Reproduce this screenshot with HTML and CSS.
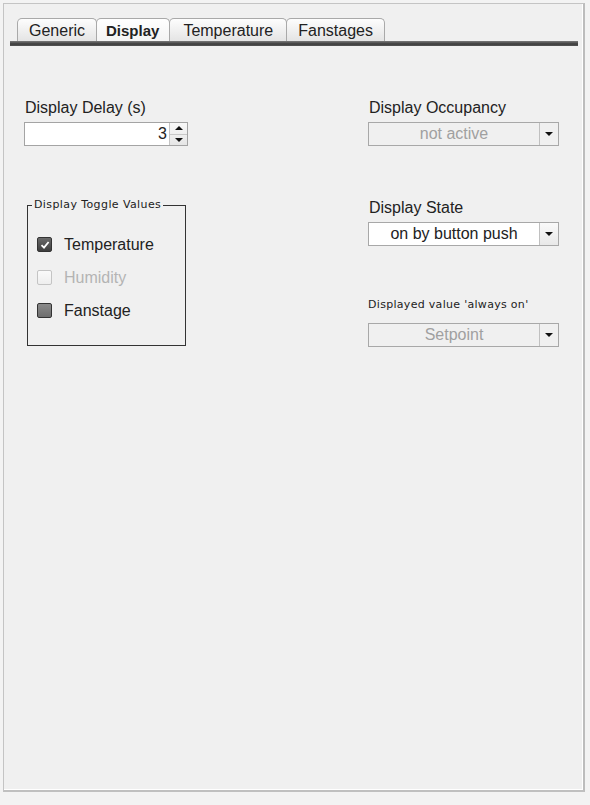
FILE: index.html
```html
<!DOCTYPE html>
<html lang="en">
<head>
  <meta charset="UTF-8" />
  <title>Display Settings</title>
  <link rel="stylesheet" href="styles.css">
</head>
<body>
  <div class="panel">
    <div class="tabs">
      <div class="tab">Generic</div>
      <div class="tab active">Display</div>
      <div class="tab wide">Temperature</div>
      <div class="tab">Fanstages</div>
    </div>
    <div class="tab-bar"></div>

    <div class="content">
      <div class="col left">
        <div class="field">
          <label class="label">Display Delay (s)</label>
          <div class="spinner">
            <div class="spin-value">3</div>
            <div class="spin-btns">
              <span class="spin-up"></span>
              <span class="spin-down"></span>
            </div>
          </div>
        </div>

        <div class="group">
          <div class="legend">Display Toggle Values</div>
          <div class="check-row">
            <span class="box checked">
              <svg width="10" height="10" viewBox="0 0 10 10"><path d="M1.5 5.2 L4 7.6 L8.6 2" fill="none" stroke="#fff" stroke-width="1.8"/></svg>
            </span>
            <span>Temperature</span>
          </div>
          <div class="check-row disabled">
            <span class="box"></span>
            <span>Humidity</span>
          </div>
          <div class="check-row">
            <span class="box mixed"></span>
            <span>Fanstage</span>
          </div>
        </div>
      </div>

      <div class="col right">
        <div class="field">
          <label class="label">Display Occupancy</label>
          <div class="select disabled">
            <div class="select-value">not active</div>
            <div class="select-btn"><span class="arrow"></span></div>
          </div>
        </div>

        <div class="field state">
          <label class="label">Display State</label>
          <div class="select">
            <div class="select-value">on by button push</div>
            <div class="select-btn"><span class="arrow"></span></div>
          </div>
        </div>

        <div class="field always">
          <label class="label small">Displayed value 'always on'</label>
          <div class="select disabled">
            <div class="select-value">Setpoint</div>
            <div class="select-btn"><span class="arrow"></span></div>
          </div>
        </div>
      </div>
    </div>
  </div>
</body>
</html>
```

FILE: styles.css
```css
* {
  box-sizing: border-box;
}
body {
  margin: 0;
  background: #f3f3f3;
  font-family: 'Liberation Sans', Arial, sans-serif;
  color: #222;
}
.panel {
  margin: 3px 0 0 3px;
  width: 582px;
  height: 789px;
  background: #f0f0f0;
  border: 1px solid #c4c4c4;
  border-right: 2px solid #bdbdbd;
  border-bottom: 2px solid #c0c0c0;
  box-shadow: inset -1px -1px 0 #fff;
}
.tabs {
  display: flex;
  padding: 14px 0 0 13px;
}
.tab {
  height: 23px;
  line-height: 24px;
  padding: 0 11px;
  font-size: 16px;
  color: #222;
  border: 1px solid #a9a9a9;
  border-bottom: none;
  border-radius: 5px 5px 0 0;
  background: linear-gradient(#fdfdfd, #e4e4e4);
  margin-right: -1px;
}
.tab.wide {
  padding: 0 13px;
}
.tab.active {
  font-weight: bold;
  font-size: 15px;
  background: linear-gradient(#ffffff, #f4f4f4);
  padding: 0 10px 0 9px;
}
.tab-bar {
  margin: 0 5px 0 6px;
  height: 5px;
  background: linear-gradient(#7a7a7a, #3c3c3c 60%, #555);
}
.content {
  display: flex;
  padding: 0 0 0 20px;
}
.col {
  display: flex;
  flex-direction: column;
}
.left {
  width: 164px;
  margin-right: 180px;
}
.right {
  width: 191px;
}
.field {
  display: flex;
  flex-direction: column;
  margin-top: 53px;
}
.label {
  font-size: 16px;
  line-height: 17px;
  margin-bottom: 6px;
  padding-left: 1px;
}
.label.small {
  font-family: 'DejaVu Sans', sans-serif;
  font-size: 11px;
  line-height: 14px;
  margin-bottom: 11px;
  letter-spacing: 0.3px;
  padding-left: 0;
}
.field.state {
  margin-top: 53px;
}
.field.always {
  margin-top: 52px;
}
.spinner {
  display: flex;
  height: 24px;
  border: 1px solid #a4a4a4;
  background: #fff;
}
.spin-value {
  flex: 1;
  text-align: right;
  font-size: 16px;
  line-height: 22px;
  padding-right: 2px;
}
.spin-btns {
  width: 18px;
  display: flex;
  flex-direction: column;
  border-left: 1px solid #c4c4c4;
  background: linear-gradient(#f8f8f8, #e6e6e6);
}
.spin-up, .spin-down {
  flex: 1;
  display: flex;
  align-items: center;
  justify-content: center;
}
.spin-up {
  border-bottom: 1px solid #c8c8c8;
}
.spin-up::after {
  content: "";
  border-left: 4px solid transparent;
  border-right: 4px solid transparent;
  border-bottom: 4px solid #111;
}
.spin-down::after {
  content: "";
  border-left: 4px solid transparent;
  border-right: 4px solid transparent;
  border-top: 4px solid #111;
}
.group {
  position: relative;
  margin: 59px 2px 0 3px;
  height: 141px;
  border: 1px solid #333;
  padding: 22px 0 0 9px;
}
.legend {
  position: absolute;
  top: -8px;
  left: 4px;
  padding: 0 2px 0 2px;
  background: #f0f0f0;
  font-family: 'DejaVu Sans', sans-serif;
  font-size: 11px;
  line-height: 14px;
  letter-spacing: 0.4px;
}
.check-row {
  display: flex;
  align-items: center;
  height: 33px;
  font-size: 16px;
}
.check-row.disabled {
  color: #b4b4b4;
}
.box {
  width: 15px;
  height: 15px;
  margin-right: 12px;
  border: 1px solid #4a4a4a;
  border-radius: 2px;
  display: flex;
  align-items: center;
  justify-content: center;
  background: linear-gradient(#f4f4f4, #dcdcdc);
}
.box.checked {
  background: linear-gradient(#6a6a6a, #3e3e3e);
  border-color: #333;
}
.box.mixed {
  background: linear-gradient(#8a8a8a, #6e6e6e);
  border-color: #333;
}
.check-row.disabled .box {
  border-color: #c4c4c4;
  background: linear-gradient(#fafafa, #eeeeee);
}
.select {
  display: flex;
  height: 24px;
  border: 1px solid #a8a8a8;
  background: #fff;
}
.select.disabled {
  background: #f0f0f0;
  color: #a0a0a0;
}
.select-value {
  flex: 1;
  text-align: center;
  font-size: 16px;
  line-height: 22px;
}
.select-btn {
  width: 19px;
  border-left: 1px solid #c0c0c0;
  display: flex;
  align-items: center;
  justify-content: center;
  background: linear-gradient(#fafafa, #e8e8e8);
}
.select.disabled .select-btn {
  background: #f0f0f0;
}
.arrow {
  border-left: 4px solid transparent;
  border-right: 4px solid transparent;
  border-top: 4px solid #111;
}
```
